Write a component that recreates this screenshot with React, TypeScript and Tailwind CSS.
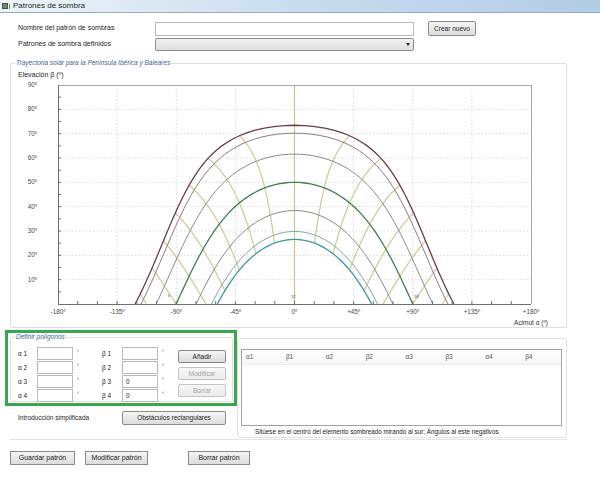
const LAT = (40 * Math.PI) / 180;
const rad = (d: number) => (d * Math.PI) / 180;
const deg = (r: number) => (r * 180) / Math.PI;

// plot area inside the chart svg
const L = 47;
const R = 520;
const T = 5;
const B = 224;
const xAz = (az: number) => L + ((az + 180) * (R - L)) / 360;
const yAlt = (alt: number) => B - (alt * (B - T)) / 90;

function sunPos(decl: number, h: number) {
  const d = rad(decl);
  const H = rad(h);
  const sinAlt = Math.sin(LAT) * Math.sin(d) + Math.cos(LAT) * Math.cos(d) * Math.cos(H);
  const alt = deg(Math.asin(Math.max(-1, Math.min(1, sinAlt))));
  const az = deg(Math.atan2(Math.sin(H), Math.cos(H) * Math.sin(LAT) - Math.tan(d) * Math.cos(LAT)));
  return { alt, az };
}

function dayPath(decl: number) {
  const h0 = deg(Math.acos(-Math.tan(LAT) * Math.tan(rad(decl))));
  const pts: string[] = [];
  for (let i = 0; i <= 90; i++) {
    const h = -h0 + (2 * h0 * i) / 90;
    const p = sunPos(decl, h);
    pts.push(`${xAz(p.az).toFixed(2)},${yAlt(Math.max(0, p.alt)).toFixed(2)}`);
  }
  return "M" + pts.join(" L");
}

function hourPath(h: number) {
  const d0 = deg(Math.atan(-Math.cos(rad(h)) / Math.tan(LAT)));
  const lo = Math.max(-23.45, d0);
  if (lo >= 23.45) return "";
  const pts: string[] = [];
  for (let i = 0; i <= 40; i++) {
    const d = lo + ((23.45 - lo) * i) / 40;
    const p = sunPos(d, h);
    pts.push(`${xAz(p.az).toFixed(2)},${yAlt(Math.max(0, p.alt)).toFixed(2)}`);
  }
  return "M" + pts.join(" L");
}

const days = [
  { d: 23.45, c: "#6b3c4c", w: 1.3 },
  { d: 20.2, c: "#8d7b80", w: 1 },
  { d: 11.6, c: "#8a8a84", w: 1 },
  { d: 0, c: "#3f8050", w: 1.3 },
  { d: -11.6, c: "#7d9080", w: 1 },
  { d: -20.2, c: "#7ea7a5", w: 1 },
  { d: -23.45, c: "#3c9a9a", w: 1.3 },
];

const hours = [-105, -90, -75, -60, -45, -30, -15, 15, 30, 45, 60, 75, 90, 105];
const xLabels = ["-180º", "-135º", "-90º", "-45º", "0º", "+45º", "+90º", "+135º", "+180º"];

function SunChart() {
  return (
    <svg width={555} height={247} className="block">
      {/* grid */}
      {[10, 20, 30, 40, 50, 60, 70, 80].map((e) => (
        <line key={"h" + e} x1={L} x2={R} y1={yAlt(e)} y2={yAlt(e)} stroke="#d9d9d9" strokeDasharray="1.5 2" />
      ))}
      {[-135, -90, -45, 45, 90, 135].map((a) => (
        <line key={"v" + a} x1={xAz(a)} x2={xAz(a)} y1={T} y2={B} stroke="#d9d9d9" strokeDasharray="1.5 2" />
      ))}
      <line x1={xAz(0)} x2={xAz(0)} y1={T} y2={B} stroke="#cbc48f" strokeWidth={1.2} />

      {/* frame */}
      <line x1={L} x2={R} y1={T + 0.5} y2={T + 0.5} stroke="#a9a9a9" />
      <line x1={R + 0.5} x2={R + 0.5} y1={T} y2={B} stroke="#a9a9a9" />

      {hours.map((h) => (
        <path key={h} d={hourPath(h)} fill="none" stroke="#d0cd9e" strokeWidth={1.3} />
      ))}
      {days.map((s) => (
        <path key={s.d} d={dayPath(s.d)} fill="none" stroke={s.c} strokeWidth={s.w} />
      ))}

      <line x1={L + 0.5} x2={L + 0.5} y1={T} y2={B} stroke="#6e6e6e" />
      <line x1={L} x2={R} y1={B + 0.5} y2={B + 0.5} stroke="#6e6e6e" />
      {Array.from({ length: 17 }, (_, i) => (i + 1) * 5).map((e) => (
        <line key={"ty" + e} x1={L} x2={L + 3} y1={yAlt(e)} y2={yAlt(e)} stroke="#6e6e6e" />
      ))}
      {Array.from({ length: 23 }, (_, i) => -165 + i * 15).map((a) => (
        <line key={"tx" + a} x1={xAz(a)} x2={xAz(a)} y1={B} y2={B - 3} stroke="#6e6e6e" />
      ))}

      {[10, 20, 30, 40, 50, 60, 70, 80, 90].map((e) => (
        <text key={"ly" + e} x={26} y={yAlt(e) + 2} textAnchor="end" fontSize={6.3} fill="#4a4a4a">
          {e}º
        </text>
      ))}
      {xLabels.map((t, i) => (
        <text key={t} x={xAz(-180 + i * 45)} y={234} textAnchor="middle" fontSize={6.3} fill="#4a4a4a">
          {t}
        </text>
      ))}
      <text x={157} y={217} fontSize={4} fill="#444">6</text>
      <text x={280} y={218} fontSize={4} fill="#444">12</text>
      <text x={403} y={218} fontSize={4} fill="#444">18</text>
      <text x={537} y={245} textAnchor="end" fontSize={6.5} fill="#333">
        Acimut α (º)
      </text>
    </svg>
  );
}

function Btn({ children, w, off }: { children: React.ReactNode; w: string; off?: boolean }) {
  return (
    <div
      className={`${w} h-[13px] flex items-center justify-center rounded-[2px] border bg-linear-to-b from-[#f5f5f5] to-[#dcdcdc] text-[6.5px] ${
        off ? "border-[#c4c4c4] text-[#a3a3a3] from-[#f7f7f7] to-[#ebebeb]" : "border-[#8a8a8a] text-[#222]"
      }`}
    >
      {children}
    </div>
  );
}

function Field({ value }: { value?: string }) {
  return (
    <div className="w-[36px] h-[13px] border border-[#b5b8bf] bg-white text-[6.5px] pl-[3px] flex items-center">
      {value}
    </div>
  );
}

const polyRows = [
  { a: "α 1", b: "β 1", v: "" },
  { a: "α 2", b: "β 2", v: "" },
  { a: "α 3", b: "β 3", v: "0" },
  { a: "α 4", b: "β 4", v: "0" },
];

const cols = ["α1", "β1", "α2", "β2", "α3", "β3", "α4", "β4"];

export default function App() {
  return (
    <div className="w-[600px] h-[487px] bg-white overflow-hidden text-[#1e1e1e] font-['Liberation_Sans',Arial,sans-serif]">
      <div className="h-[13px] flex items-center bg-linear-to-r from-[#eef4fa] via-[#c9dcef] to-[#b3cce6] border-b border-[#93aecb]">
        <div className="ml-[2px] w-[6px] h-[6px] bg-[#6f8c72] border border-[#40583f]" />
        <div className="ml-[1px] w-[1px] h-[5px] bg-[#6f8c72]" />
        <span className="ml-[3px] text-[8px] leading-none">Patrones de sombra</span>
      </div>

      <div className="pl-[18px] mt-[8px] flex items-center h-[15px]">
        <span className="w-[137px] text-[7px]">Nombre del patrón de sombras</span>
        <div className="w-[259px] h-[14px] border border-[#b5b8bf] bg-white" />
        <div className="ml-[14px] w-[48px] h-[15px] flex items-center justify-center rounded-[2px] border border-[#8a8a8a] bg-linear-to-b from-[#f5f5f5] to-[#dcdcdc] text-[6.5px]">
          Crear nuevo
        </div>
      </div>
      <div className="pl-[18px] mt-[2px] flex items-center h-[13px]">
        <span className="w-[137px] text-[7px]">Patrones de sombra definidos</span>
        <div className="w-[259px] h-[13px] rounded-[2px] border border-[#8e8f8f] bg-linear-to-b from-[#f3f3f3] to-[#dedede] flex items-center justify-end pr-[3px]">
          <div className="w-0 h-0 border-l-[2.5px] border-r-[2.5px] border-t-[3px] border-l-transparent border-r-transparent border-t-[#222]" />
        </div>
      </div>

      <fieldset className="ml-[10px] mt-[7px] w-[557px] border border-[#dedede] rounded-[2px]">
        <legend className="ml-[4px] px-[1px] text-[6.5px] italic text-[#3d62a0] leading-[10px]">
          Trayectoria solar para la Península Ibérica y Baleares
        </legend>
        <div className="pl-[7px] mt-[2px] text-[7px] leading-[10px]">Elevación β (º)</div>
        <SunChart />
      </fieldset>

      <div className="flex h-[111px]">
        <div className="w-[237px]">
          <div className="ml-[5px] mt-[2px] w-[232px] h-[76px] border-[3px] border-[#37a84e]">
            <fieldset className="ml-[2px] w-[223px] h-[69px] border border-[#e0e0e0] rounded-[2px]">
              <legend className="ml-[4px] px-[1px] text-[6.5px] italic text-[#3d62a0] leading-[8px]">
                Definir polígonos
              </legend>
              <div className="flex">
                <div className="pl-[7px] mt-[6px] flex flex-col">
                  {polyRows.map((r) => (
                    <div key={r.a} className="h-[14px] flex items-start text-[6.5px]">
                      <span className="w-[19px] h-[13px] flex items-center">{r.a}</span>
                      <Field />
                      <span className="ml-[4px] w-[25px] text-[5px] text-[#555] leading-[9px]">º</span>
                      <span className="w-[20px] h-[13px] flex items-center">{r.b}</span>
                      <Field value={r.v} />
                      <span className="ml-[4px] w-[16px] text-[5px] text-[#555] leading-[9px]">º</span>
                    </div>
                  ))}
                </div>
                <div className="mt-[9px] flex flex-col gap-[4px]">
                  <Btn w="w-[48px]">Añadir</Btn>
                  <Btn w="w-[48px]" off>
                    Modificar
                  </Btn>
                  <Btn w="w-[48px]" off>
                    Borrar
                  </Btn>
                </div>
              </div>
            </fieldset>
          </div>
          <div className="pl-[18px] mt-[5px] flex items-center">
            <span className="w-[104px] text-[6.5px]">Introducción simplificada</span>
            <div className="w-[104px] h-[14px] flex items-center justify-center rounded-[2px] border border-[#8a8a8a] bg-linear-to-b from-[#f5f5f5] to-[#dcdcdc] text-[6.5px]">
              Obstáculos rectangulares
            </div>
          </div>
        </div>

        <div className="mt-[10px] w-[330px] h-[100px] border border-[#e0e0e0] rounded-[3px] pl-[3px] pt-[10px]">
          <div className="w-[321px] h-[77px] border border-[#a3a3a3] bg-white">
            <div className="flex h-[15px] items-center border-b border-[#ececec] bg-linear-to-b from-white to-[#f6f6f6]">
              {cols.map((c) => (
                <span key={c} className="w-[40px] pl-[4px] text-[6.5px] text-[#555]">
                  {c}
                </span>
              ))}
            </div>
          </div>
          <div className="pl-[14px] mt-[1px] text-[6.3px] leading-[9px] text-[#222]">
            Sitúese en el centro del elemento sombreado mirando al sur; Ángulos al este negativos
          </div>
        </div>
      </div>
      <div className="ml-[10px] w-[557px] border-t border-[#e4e4e4]" />

      <div className="mt-[11px] flex items-center">
        <div className="ml-[10px]">
          <Btn w="w-[65px] h-[14px] rounded-none text-[7px]">Guardar patrón</Btn>
        </div>
        <div className="ml-[10px]">
          <Btn w="w-[63px] h-[14px] rounded-none text-[7px]">Modificar patrón</Btn>
        </div>
        <div className="ml-[40px]">
          <Btn w="w-[62px] h-[14px] rounded-none text-[7px]">Borrar patrón</Btn>
        </div>
      </div>
    </div>
  );
}
